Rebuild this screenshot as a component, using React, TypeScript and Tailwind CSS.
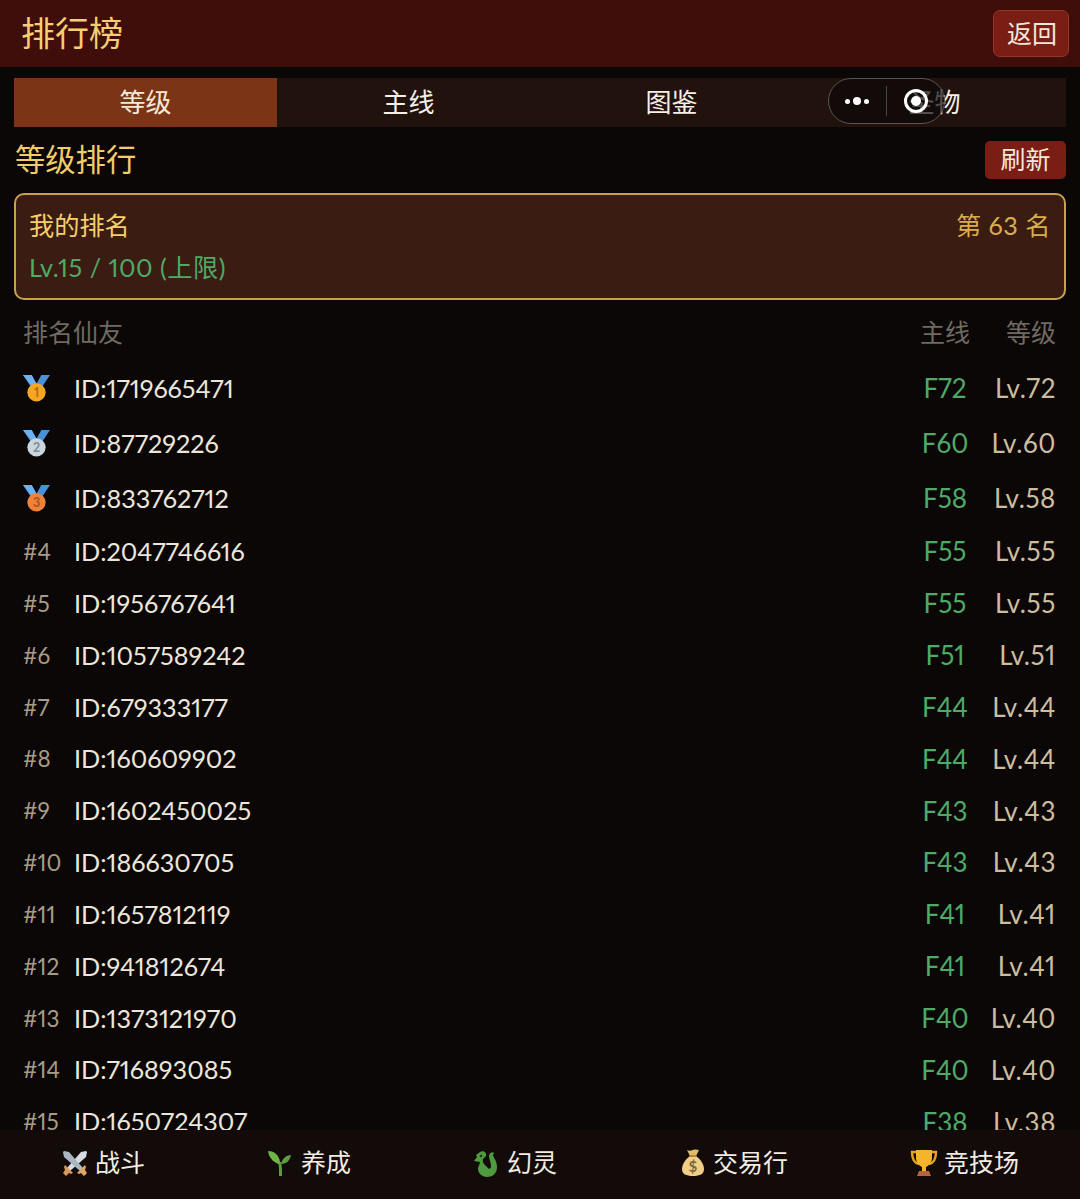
import React from "react";

const font = { fontFamily: '"Lato","Noto Sans CJK SC",sans-serif' };

function Medal({ color, dark, n }: { color: string; dark: string; n: string }) {
  return (
    <svg width="27" height="29" viewBox="0 0 28 30" className="block">
      <path d="M0 1h9l5 9 5-9h9l-10 15h-8z" fill="#4a90d9" />
      <path d="M9 1l5 9-3 5L0 1z" fill="#6cb2ee" />
      <circle cx="14" cy="19" r="9.5" fill={color} />
      <text x="14" y="24" textAnchor="middle" fontSize="13" fontWeight="700" fill={dark} fontFamily="Lato, sans-serif">{n}</text>
    </svg>
  );
}

function Swords() {
  return (
    <svg width="28" height="28" viewBox="0 0 28 28">
      <path d="M25 2l1 1-1 5L9 22l-3-3L20 3z" fill="#d5dde3" />
      <path d="M3 2l-1 1 1 5 16 14 3-3L8 3z" fill="#aab7c1" />
      <path d="M4 16l8 8-2 1-2-1-3 3-2-2-1-1 2-3-1-3z" fill="#d99a5b" />
      <path d="M24 16l-8 8 2 1 2-1 3 3 3-3-2-3 1-3z" fill="#e2a469" />
    </svg>
  );
}
function Seedling() {
  return (
    <svg width="28" height="28" viewBox="0 0 28 28">
      <path d="M12 27c0-6 0-10-1-14h3c1 4 1 9 1 14z" fill="#5c9e3f" />
      <path d="M12 15C8 14 2 10 1 2c5 0 11 3 12 11z" fill="#6fb548" />
      <path d="M14 15c1-5 5-9 10-9-1 5-4 9-10 9z" fill="#5c9e3f" />
    </svg>
  );
}
function Dragon() {
  return (
    <svg width="28" height="28" viewBox="0 0 28 28">
      <path d="M7 3c4-2 7 1 6 4l-3 3c-1 3 1 5 4 8 2 3 4 2 4-1 0-4-2-7-2-10 0-3 4-5 5-3l-1 2c0 2 4 6 4 12 0 7-5 10-10 10S5 24 5 20c0-3 2-5 2-7L1 12l3-4-1-2z" fill="#4f9a3e" />
      <circle cx="8" cy="7" r="1.3" fill="#1d3a16" />
    </svg>
  );
}
function Bag() {
  return (
    <svg width="28" height="28" viewBox="0 0 28 28">
      <path d="M8 1c2 1 3 1 6 0s4 0 6 0l-3 6h-6z" fill="#e3bb6d" />
      <path d="M11 7h6c4 3 8 8 8 13 0 5-4 7-11 7S3 25 3 20C3 15 7 10 11 7z" fill="#f1cd85" />
      <rect x="10.5" y="6" width="7" height="2" rx="1" fill="#b8863c" />
      <text x="14" y="23" textAnchor="middle" fontSize="15" fontWeight="700" fill="#7a6a43" fontFamily="Lato, sans-serif">$</text>
    </svg>
  );
}
function Trophy() {
  return (
    <svg width="28" height="28" viewBox="0 0 28 28">
      <path d="M6 3H2c0 7 2 11 7 12M22 3h4c0 7-2 11-7 12" fill="none" stroke="#e9a21c" strokeWidth="2.4" />
      <path d="M6 1h16v8c0 5-4 8-6 9v4h-4v-4c-2-1-6-4-6-9z" fill="#f5b52a" />
      <path d="M9 22h10l2 5H7z" fill="#b5653a" />
    </svg>
  );
}

const rows = [
  ["1719665471", "72"], ["87729226", "60"], ["833762712", "58"], ["2047746616", "55"],
  ["1956767641", "55"], ["1057589242", "51"], ["679333177", "44"], ["160609902", "44"],
  ["1602450025", "43"], ["186630705", "43"], ["1657812119", "41"], ["941812674", "41"],
  ["1373121970", "40"], ["716893085", "40"], ["1650724307", "38"],
];

const medals = [
  <Medal color="#f5a623" dark="#b9690c" n="1" />,
  <Medal color="#c9d6de" dark="#7d8c97" n="2" />,
  <Medal color="#ee8238" dark="#a8511a" n="3" />,
];

const tabs = ["等级", "主线", "图鉴", "圣物"];
const nav: [React.ReactNode, string][] = [
  [<Swords />, "战斗"], [<Seedling />, "养成"], [<Dragon />, "幻灵"], [<Bag />, "交易行"], [<Trophy />, "竞技场"],
];

export default function App() {
  return (
    <div style={font} className="relative flex h-[1199px] w-[1080px] flex-col overflow-hidden bg-[#0b0706] text-[#f0e9dc] proportional-nums">
      <header className="flex h-[67px] shrink-0 items-center justify-between bg-[#3f0e0b] pb-[2px] pl-[21px] pr-[11px]">
        <h1 className="text-[34px] font-normal text-[#f5cf6e]">排行榜</h1>
        <button className="mt-[2px] flex h-[47px] w-[76px] items-center justify-center rounded-[7px] border border-[#98352a] bg-[#7a1d14] pl-[2px] text-[25px] text-[#f3e7da]">返回</button>
      </header>

      <div className="mx-[14px] mt-[11px] flex h-[49px] shrink-0 bg-[#21120e]">
        {tabs.map((t, i) => (
          <div key={t} className={`flex flex-1 items-center justify-center text-[26px] ${i === 0 ? "bg-[#7b3416] text-[#f6e8d6]" : "text-[#f5efe6]"}`}>{t}</div>
        ))}
      </div>

      <div className="mx-[14px] mt-[14px] flex h-[38px] shrink-0 items-center justify-between">
        <h2 className="pb-[1px] pl-px text-[30.3px] font-normal text-[#f2cc68]">等级排行</h2>
        <button className="flex h-[38px] w-[81px] items-center justify-center rounded-[5px] bg-[#7a1d14] text-[25px] text-[#f3e7da]">刷新</button>
      </div>

      <section className="mx-[14px] mt-[14px] h-[107px] shrink-0 rounded-[10px] border-2 border-[#c6a14e] bg-[#3a1c12] px-[13px] pt-[11px]">
        <div className="flex items-center justify-between text-[25.2px] leading-[38px]">
          <span className="text-[#f5cf6e]">我的排名</span>
          <span className="tracking-[0.5px] text-[#d9ad4d]">第 63 名</span>
        </div>
        <div className="mt-[4px] text-[25.2px] leading-[38px] tracking-[0.5px] text-[#4eaa66]">Lv.15 / 100 (上限)</div>
      </section>

      <div className="mt-[14px] flex h-[38px] shrink-0 items-center pl-[23px] pr-[24px] text-[25px] text-[#6f6a62]">
        <span className="flex-1">排名仙友</span>
        <span className="w-[82px] text-center">主线</span>
        <span className="w-[70px] text-right">等级</span>
      </div>

      <main className="min-h-0 flex-1 overflow-hidden pt-[9px]">
        {rows.map(([id, n], i) => (
          <div key={id} className={`flex items-center pl-[23px] pr-[24px] text-[26px] ${i < 3 ? "h-[55px]" : "h-[51.85px]"}`}>
            <span className="w-[51px] shrink-0 text-[22.5px] text-[#a79c87]">
              {i < 3 ? medals[i] : `#${i + 1}`}
            </span>
            <span className="flex-1 text-[25.2px] text-[#ece6da]">ID:{id}</span>
            <span className="w-[82px] text-center text-[#4eaa66]">F{n}</span>
            <span className="w-[70px] text-right tracking-[0.6px] text-[#cdbd9f]">Lv.{n}</span>
          </div>
        ))}
      </main>

      <nav className="flex h-[69px] shrink-0 items-center justify-around bg-[#120b09] pb-[3px] text-[25px] text-[#f3ece2]">
        {nav.map(([icon, label]) => (
          <div key={label} className="flex items-center gap-[6px]">
            {icon}
            <span>{label}</span>
          </div>
        ))}
      </nav>

      <div className="absolute left-[828px] top-[78px] flex h-[46px] w-[117px] items-center rounded-full border border-[#5a5550] bg-[#0d0808]/70">
        <div className="flex w-[57px] items-center justify-center gap-[3px] pr-[2px]">
          <span className="h-[5px] w-[5px] rounded-full bg-white" />
          <span className="h-[8px] w-[8px] rounded-full bg-white" />
          <span className="h-[5px] w-[5px] rounded-full bg-white" />
        </div>
        <span className="h-[30px] w-px bg-[#4a4540]" />
        <span className="ml-[17px] flex h-[24px] w-[24px] items-center justify-center rounded-full border-[3px] border-white">
          <span className="h-[10px] w-[10px] rounded-full bg-white" />
        </span>
      </div>
    </div>
  );
}
